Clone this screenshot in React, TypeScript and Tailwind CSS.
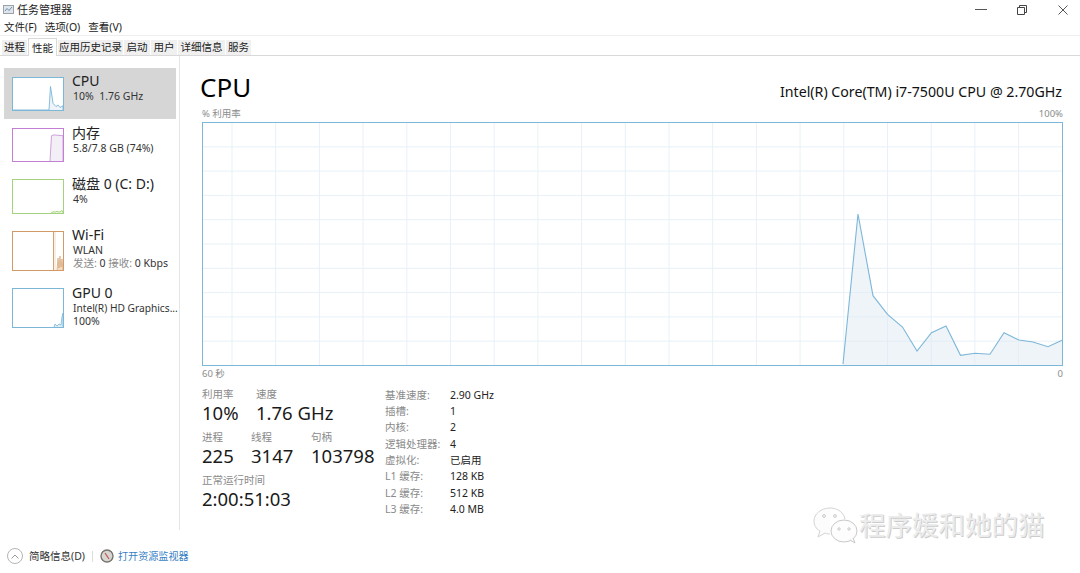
const font = { fontFamily: '"Noto Sans", "Noto Sans CJK SC", sans-serif' };

const tabs = [
  { label: '进程', w: 'w-[25px]' },
  { label: '性能', w: 'w-[29px]', active: true },
  { label: '应用历史记录', w: 'w-[65px]' },
  { label: '启动', w: 'w-[26px]' },
  { label: '用户', w: 'w-[26px]' },
  { label: '详细信息', w: 'w-[47px]' },
  { label: '服务', w: 'w-[25px]' },
];

const cpuPoints =
  '641,242 656,92 671,173.7 685.5,192.3 700.5,205 715,229 729.5,210.7 744,204 758.5,233.3 773,231.3 788,232.3 802,210.7 817,218 831,220 846,224.7 860,218.3';

const hLines = [24.3, 48.6, 72.9, 97.2, 121.5, 145.8, 170.1, 194.4, 218.7];
const vLines = [30, 73.7, 117.4, 161.1, 204.8, 248.5, 292.2, 335.9, 379.6, 423.3, 467, 510.7, 554.4, 598.1, 641.8, 685.5, 729.2, 772.9, 816.6];

const Thumb = ({ border, h, children }: { border: string; h: string; children?: React.ReactNode }) => (
  <div className={`w-[52px] ${h} border ${border} bg-white shrink-0 overflow-hidden`}>
    <svg width="50" height="100%" viewBox="0 0 50 38" preserveAspectRatio="none" className="block w-full h-full">
      {children}
    </svg>
  </div>
);

const Stat = ({ label, value, className }: { label: string; value: string; className: string }) => (
  <div className={className}>
    <div className="text-[10.5px] leading-[13px] text-[#8a8a8a]">{label}</div>
    <div className="text-[18.5px] leading-[24px] text-[#1a1a1a]">{value}</div>
  </div>
);

const specs = [
  ['基准速度:', '2.90 GHz'],
  ['插槽:', '1'],
  ['内核:', '2'],
  ['逻辑处理器:', '4'],
  ['虚拟化:', '已启用'],
  ['L1 缓存:', '128 KB'],
  ['L2 缓存:', '512 KB'],
  ['L3 缓存:', '4.0 MB'],
];

export default function App() {
  return (
    <div className="relative w-[1080px] h-[573px] bg-white overflow-hidden flex flex-col text-[#222]" style={font}>
      {/* Title bar */}
      <div className="h-[19px] flex items-center pl-[3px] shrink-0">
        <svg width="11" height="11" viewBox="0 0 11 11" className="mr-[3px]">
          <rect x="0.5" y="1.5" width="10" height="8" fill="#dfe5ea" stroke="#9aa3ab" />
          <path d="M2 7 L4 4.5 L6 6.5 L9 3" fill="none" stroke="#6b8fb0" />
        </svg>
        <span className="text-[11px] leading-none">任务管理器</span>
        <div className="ml-auto flex items-center">
          <div className="w-[12px] h-px bg-[#555] mr-[30px]" />
          <svg width="10" height="10" viewBox="0 0 10 10" className="mr-[31px] mt-[1px]">
            <path d="M0.5 2.5 H7.5 V9.5 H0.5 Z M2.5 2.5 V0.5 H9.5 V7.5 H7.5" fill="none" stroke="#444" />
          </svg>
          <svg width="10" height="10" viewBox="0 0 10 10" className="mr-[12px] mt-[1px]">
            <path d="M0.5 0.5 L9.5 9.5 M9.5 0.5 L0.5 9.5" fill="none" stroke="#555" />
          </svg>
        </div>
      </div>

      {/* Menu */}
      <div className="h-[16px] flex items-center gap-[8px] pl-[4px] text-[10.5px] leading-none border-b border-[#eeeeee] box-content shrink-0">
        <span>文件(F)</span>
        <span>选项(O)</span>
        <span>查看(V)</span>
      </div>

      {/* Tabs */}
      <div className="h-[19px] flex items-end gap-px pl-[2px] border-b border-[#d9d9d9] shrink-0 box-content">
        {tabs.map((tab) => (
          <div
            key={tab.label}
            className={`${tab.w} text-center text-[10.5px] leading-none ${
              tab.active
                ? 'h-[18px] pt-[4px] bg-white border-x border-t border-[#d9d9d9] -mb-px'
                : 'h-[15px] pt-[2px] bg-[#f0f0f0]'
            }`}
          >
            {tab.label}
          </div>
        ))}
      </div>

      <div className="flex-1 flex min-h-0">
        {/* Sidebar */}
        <div className="w-[180px] shrink-0 pl-[4px] pr-[3px] pt-[12px] h-[474px] border-r border-[#e6e6e6]">
          <div className="h-[51px] bg-[#d6d6d6] flex pl-[8px] pt-[9px]">
            <Thumb border="border-[#7db7d8]" h="h-[34px]">
              <polyline points="0,38 36,38 37.5,10 40,30 43,34 45,32 47,35 50,33 50,38" fill="#eef4f9" stroke="#7db7d8" strokeWidth="1" />
            </Thumb>
            <div className="ml-[8px] -mt-[5px]">
              <div className="text-[14px] leading-[18px]">CPU</div>
              <div className="pl-px text-[10.5px] leading-[12px] text-[#333]">10%&nbsp; 1.76 GHz</div>
            </div>
          </div>

          <div className="h-[51px] flex pl-[8px] pt-[9px]">
            <Thumb border="border-[#c27fd3]" h="h-[34px]">
              <polyline points="37,38 38.5,8 41,7 50,8 50,38" fill="#f3eff6" stroke="#c99bd8" strokeWidth="1" />
            </Thumb>
            <div className="ml-[8px] -mt-[4px]">
              <div className="text-[14px] leading-[18px]">内存</div>
              <div className="pl-px text-[10.5px] leading-[12px] text-[#333]">5.8/7.8 GB (74%)</div>
            </div>
          </div>

          <div className="h-[51px] flex pl-[8px] pt-[9px]">
            <Thumb border="border-[#a3d37f]" h="h-[35px]">
              <polyline points="38,38 40,36.5 42,37 44,36 46,37 48,36 49,35 50,37 50,38" fill="#eaf5e0" stroke="#a3d37f" strokeWidth="1" />
            </Thumb>
            <div className="ml-[8px] -mt-[4px]">
              <div className="text-[14px] leading-[18px]">磁盘 0 (C: D:)</div>
              <div className="pl-px text-[10.5px] leading-[12px] text-[#333]">4%</div>
            </div>
          </div>

          <div className="h-[58px] flex pl-[8px] pt-[10px]">
            <Thumb border="border-[#d19a66]" h="h-[40px]">
              <path d="M40.5 38 V0" stroke="#c98a4f" strokeWidth="0.8" fill="none" />
              <path d="M42 38 V0" stroke="#e9c7a5" strokeWidth="0.6" fill="none" />
              <polyline points="44,38 45,26 46,36 47,24 48,35 49,27 50,38" fill="#f3dcc4" stroke="#cf9763" strokeWidth="0.6" />
            </Thumb>
            <div className="ml-[8px] -mt-[5px]">
              <div className="text-[14px] leading-[17px]">Wi-Fi</div>
              <div className="pl-px text-[10.5px] leading-[14px] text-[#333]">WLAN</div>
              <div className="pl-px text-[10.5px] leading-[13px] text-[#333]">
                <span className="text-[#8a8a8a]">发送:</span> 0 <span className="text-[#8a8a8a]">接收:</span> 0 Kbps
              </div>
            </div>
          </div>

          <div className="h-[56px] flex pl-[8px] pt-[9px]">
            <Thumb border="border-[#7db7d8]" h="h-[40px]">
              <polyline points="41,38 42,35 44,37 46,35 48,36 49,28 50,24 50,38" fill="#dcebf5" stroke="#7db7d8" strokeWidth="0.8" />
            </Thumb>
            <div className="ml-[8px] -mt-[4px] w-[107px]">
              <div className="text-[14px] leading-[17px]">GPU 0</div>
              <div className="pl-px text-[10.2px] leading-[14px] text-[#333] whitespace-nowrap">Intel(R) HD Graphics...</div>
              <div className="pl-px text-[10.5px] leading-[13px] text-[#333]">100%</div>
            </div>
          </div>
        </div>

        {/* Main */}
        <div className="flex-1 pl-[22px] pr-[17px] pt-[12px] min-w-0">
          <div className="flex items-end justify-between h-[38px]">
            <div className="text-[26px] leading-[38px] -ml-[2px] text-black">CPU</div>
            <div className="text-[14.2px] leading-[20px] mb-[4px] mr-px text-[#111]">Intel(R) Core(TM) i7-7500U CPU @ 2.70GHz</div>
          </div>
          <div className="flex justify-between text-[9.5px] leading-[12px] text-[#8c8c8c] mt-[2px] mb-[2px]">
            <span>% 利用率</span>
            <span>100%</span>
          </div>

          <svg width="861" height="244" viewBox="0 0 861 244" className="block">
            <rect x="0.5" y="0.5" width="860" height="243" fill="#ffffff" />
            {hLines.map((y) => (
              <line key={y} x1="0" x2="860" y1={y + 0.5} y2={y + 0.5} stroke="#e8f1f7" />
            ))}
            {vLines.map((x) => (
              <line key={x} x1={x} x2={x} y1="0" y2="243" stroke="#e8f1f7" />
            ))}
            <polygon points={`${cpuPoints} 860,243 641,243`} fill="#dfeaf3" fillOpacity="0.5" />
            <polyline points={cpuPoints} fill="none" stroke="#7db7d8" strokeWidth="1.1" />
            <rect x="0.5" y="0.5" width="860" height="243" fill="none" stroke="#7db7d8" />
          </svg>

          <div className="flex justify-between text-[9.5px] leading-[12px] text-[#8c8c8c] mt-[2px]">
            <span>60 秒</span>
            <span>0</span>
          </div>

          <div className="flex mt-[8px]">
            <div className="w-[183px]">
              <div className="flex">
                <Stat label="利用率" value="10%" className="w-[54px]" />
                <Stat label="速度" value="1.76 GHz" className="" />
              </div>
              <div className="flex mt-[6px]">
                <Stat label="进程" value="225" className="w-[49px]" />
                <Stat label="线程" value="3147" className="w-[60px]" />
                <Stat label="句柄" value="103798" className="" />
              </div>
              <Stat label="正常运行时间" value="2:00:51:03" className="mt-[6px]" />
            </div>
            <div className="flex flex-col -mt-[1px]">
              {specs.map(([k, v]) => (
                <div key={k} className="flex h-[16.3px] items-center text-[10.5px] leading-none">
                  <span className="w-[65px] text-[#8a8a8a]">{k}</span>
                  <span className="text-[#222]">{v}</span>
                </div>
              ))}
            </div>
          </div>
        </div>
      </div>

      {/* Footer */}
      <div className="h-[42px] shrink-0 flex items-center pl-[7px] pt-[8px]">
        <div className="w-[16px] h-[16px] rounded-full border border-[#b5b5b5] flex items-center justify-center">
          <svg width="8" height="5" viewBox="0 0 8 5">
            <path d="M0.5 4.5 L4 1 L7.5 4.5" fill="none" stroke="#999" />
          </svg>
        </div>
        <span className="ml-[6px] text-[10.5px] leading-none text-[#333]">简略信息(D)</span>
        <div className="w-px h-[11px] bg-[#dddddd] ml-[7px] mr-[7px]" />
        <svg width="14" height="14" viewBox="0 0 14 14">
          <circle cx="7" cy="7" r="6" fill="#d8d6d2" stroke="#77746e" strokeWidth="1.4" />
          <path d="M5 4 L9 10" stroke="#c0504a" strokeWidth="1.2" />
        </svg>
        <span className="ml-[4px] text-[10.1px] leading-none text-[#3a7fc4]">打开资源监视器</span>
      </div>

      {/* Watermark */}
      <div className="absolute left-[812px] top-[505px] flex items-center">
        <svg width="46" height="40" viewBox="0 0 46 40" fill="none">
          <path d="M18 3 C9 3 2 9 2 16 C2 20 4 24 8 26 L6 32 L13 28 C15 29 17 29 18 29" stroke="#d4d4d4" strokeWidth="1" fill="#fcfcfc" />
          <path d="M18 3 C26 3 32 8 33 14" stroke="#d4d4d4" strokeWidth="1" />
          <ellipse cx="32" cy="26" rx="13" ry="11" stroke="#c8c8c8" strokeWidth="1" fill="#fdfdfd" />
          <path d="M38 35 L43 38 L41 33" stroke="#c8c8c8" strokeWidth="1" fill="#fdfdfd" />
          <circle cx="12" cy="11" r="1.4" stroke="#c8c8c8" />
          <circle cx="23" cy="11" r="1.4" stroke="#c8c8c8" />
          <circle cx="27" cy="24" r="1.2" stroke="#c8c8c8" />
          <circle cx="37" cy="24" r="1.2" stroke="#c8c8c8" />
        </svg>
        <span className="ml-[1px] text-[26.5px] leading-none text-[#ececec] [text-shadow:1px_1px_0_#cccccc] whitespace-nowrap">
          程序媛和她的猫
        </span>
      </div>
    </div>
  );
}
